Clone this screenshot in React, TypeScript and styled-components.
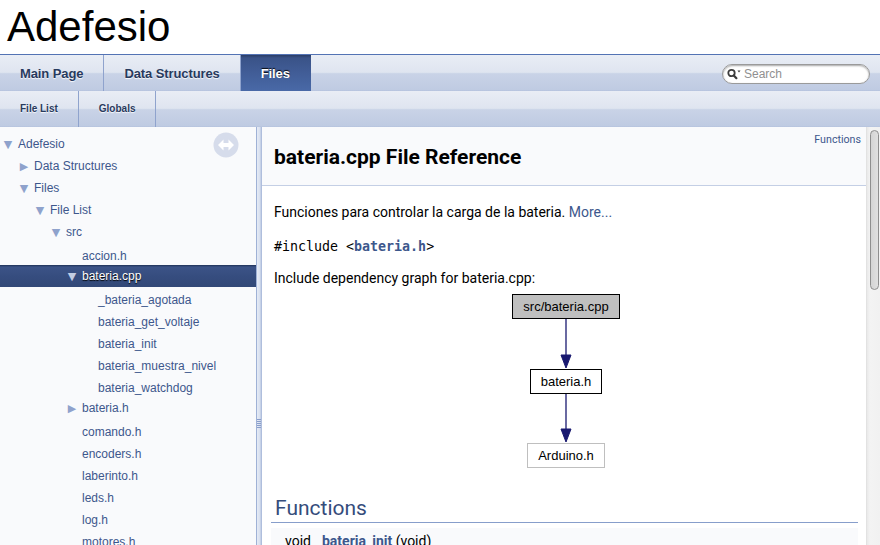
import React from "react";
import styled, { createGlobalStyle } from "styled-components";

const GlobalStyle = createGlobalStyle`
  html, body { margin: 0; padding: 0; background: #ffffff; }
  body { font-family: Roboto, "Liberation Sans", sans-serif; }
`;

const Page = styled.div`
  width: 880px;
  height: 545px;
  overflow: hidden;
  display: flex;
  flex-direction: column;
`;

const TitleArea = styled.div`
  height: 55px;
  box-sizing: border-box;
  padding: 3px 0 0 7px;
  border-bottom: 1px solid #5373b4;
  font: 42px "Liberation Sans", Arial, sans-serif;
  color: #000;
  line-height: normal;
`;

const NavBar = styled.div`
  height: 36px;
  display: flex;
  align-items: stretch;
  background: linear-gradient(
    to bottom,
    #e9edf5 0%,
    #dfe5f0 48%,
    #c9d3e7 52%,
    #bfcbe2 97%,
    #b3c1dd 100%
  );
`;

const Tab = styled.div<{ $active?: boolean; $small?: boolean }>`
  padding: ${(p) => (p.$small ? "0 20px" : "1px 20px 0")};
  height: 36px;
  box-sizing: border-box;
  font-family: "Liberation Sans", Arial, sans-serif;
  font-weight: bold;
  font-size: ${(p) => (p.$small ? "10px" : "13px")};
  letter-spacing: ${(p) => (p.$small ? "0" : "-0.1px")};
  line-height: ${(p) => (p.$small ? "36px" : "35px")};
  color: ${(p) => (p.$active ? "#ffffff" : "#283a5d")};
  text-shadow: ${(p) =>
    p.$active ? "0 -1px 1px rgba(0,0,0,0.9)" : "0 1px 1px rgba(255,255,255,0.9)"};
  border-right: 1px solid ${(p) => (p.$active ? "transparent" : "#8fa3cd")};
  background: ${(p) =>
    p.$active
      ? "linear-gradient(to bottom, #2a3d66 0px, #3a5388 3px, #415d97 50%, #4969a7 100%)"
      : "transparent"};
`;

const SearchWrap = styled.div`
  margin-left: auto;
  padding: 1px 10px 0 0;
  display: flex;
  align-items: center;
`;

const SearchBox = styled.div`
  width: 148px;
  height: 20px;
  box-sizing: border-box;
  border-radius: 10px;
  border: 1px solid #9a9a9a;
  background: #ffffff;
  box-shadow: inset 0 1px 2px rgba(0, 0, 0, 0.35);
  display: flex;
  align-items: center;
  padding-left: 4px;
  gap: 3px;
`;

const SearchText = styled.span`
  font: 12px "Liberation Sans", Arial, sans-serif;
  color: #909090;
`;

const Body = styled.div`
  flex: 1;
  display: flex;
  min-height: 0;
`;

const SideNav = styled.div`
  width: 256px;
  flex: none;
  position: relative;
  background: #f9fafc;
  padding-top: 6px;
  box-sizing: border-box;
  overflow: hidden;
`;

const SyncButton = styled.div`
  position: absolute;
  top: 5px;
  right: 17px;
  width: 26px;
  height: 26px;
`;

const TreeRow = styled.div<{ $level: number; $leaf?: boolean; $selected?: boolean }>`
  height: 22px;
  box-sizing: border-box;
  padding-left: ${(p) => p.$level * 16}px;
  padding-top: ${(p) => (p.$leaf ? "4px" : "0")};
  display: flex;
  align-items: center;
  white-space: nowrap;
  background: ${(p) =>
    p.$selected
      ? "linear-gradient(to bottom, #1f3157 0px, #3c5387 2px, #364d7f 50%, #324877 100%)"
      : "transparent"};
`;

const Arrow = styled.span<{ $selected?: boolean }>`
  width: 16px;
  flex: none;
  text-align: center;
  font: 11px "DejaVu Sans", sans-serif;
  color: ${(p) => (p.$selected ? "#c3cde3" : "#8fa2cc")};
`;

const TreeLabel = styled.span<{ $selected?: boolean }>`
  margin-left: 2px;
  font: 12px "Liberation Sans", Arial, sans-serif;
  color: ${(p) => (p.$selected ? "#ffffff" : "#3d578c")};
  text-shadow: ${(p) => (p.$selected ? "0 1px 1px rgba(0,0,0,1)" : "none")};
`;

const Splitter = styled.div`
  width: 6px;
  flex: none;
  display: flex;
  flex-direction: column;
  align-items: center;
  background: linear-gradient(
    to right,
    #9fb1d6 0px,
    #9fb1d6 1px,
    #e6ebf5 1px,
    #d7dfef 4px,
    #b7c5e0 5px,
    #a7b7d9 6px
  );
`;

const Grip = styled.div`
  margin-top: 292px;
  width: 4px;
  height: 9px;
  background: repeating-linear-gradient(
    to bottom,
    #8a9ecb 0px,
    #8a9ecb 1px,
    transparent 1px,
    transparent 2px
  );
`;

const DocArea = styled.div`
  flex: 1;
  display: flex;
  min-width: 0;
`;

const Doc = styled.div`
  flex: 1;
  min-width: 0;
  overflow: hidden;
  background: #ffffff;
`;

const Header = styled.div`
  background: #f9fafc;
  border-bottom: 1px solid #c4cfe5;
  height: 59px;
  box-sizing: border-box;
  display: flex;
  align-items: flex-start;
`;

const HeaderTitle = styled.div`
  flex: 1;
  padding: 16px 0 0 12px;
  font: bold 21px/28px Roboto, sans-serif;
  color: #000;
`;

const Summary = styled.a`
  padding: 6px 5px 0 0;
  font: 10.67px Roboto, sans-serif;
  color: #3d578c;
  text-decoration: none;
`;

const Contents = styled.div`
  margin: 0 8px 0 9px;
`;

const TextLine = styled.p<{ $top: number }>`
  margin: ${(p) => p.$top}px 0 0 0;
  padding-left: 3px;
  font: 14px/22px Roboto, sans-serif;
  color: #000;
`;

const Link = styled.a`
  color: #3d578c;
  text-decoration: none;
`;

const Code = styled.code`
  font: 13.3px "DejaVu Sans Mono", monospace;
  color: #000;
`;

const CodeLink = styled.a`
  color: #3d578c;
  font-weight: bold;
  text-decoration: none;
`;

const GraphWrap = styled.div`
  margin-top: 3px;
  display: flex;
  justify-content: center;
  padding-left: 3px;
`;

const GroupHeader = styled.h2`
  margin: 26px 0 0 0;
  padding: 0 0 2px 4px;
  font: 21px/24px Roboto, sans-serif;
  color: #354c7b;
  border-bottom: 1px solid #879ecb;
`;

const MemberRow = styled.div`
  margin-top: 5px;
  padding: 2px 0 0 14px;
  background: #f9fafc;
  font: 14px/22px Roboto, sans-serif;
  color: #000;
  display: flex;
  gap: 11px;
`;

const MemberLink = styled.a`
  color: #3d578c;
  font-weight: bold;
  text-decoration: none;
`;

const ScrollTrack = styled.div`
  width: 14px;
  flex: none;
  background: linear-gradient(to right, #e9e9e9 0px, #f3f3f3 3px, #f1f1f1 100%);
  border-left: 1px solid #e2e2e2;
  box-sizing: border-box;
  padding: 3px 1px 0 3px;
`;

const Thumb = styled.div`
  height: 160px;
  border: 1px solid #8e8e8e;
  border-radius: 5px;
  background: linear-gradient(to right, #d4d4d4, #e0e0e0);
  box-sizing: border-box;
`;

type Node = {
  label: string;
  level: number;
  arrow?: "down" | "right";
  selected?: boolean;
};

const tree: Node[] = [
  { label: "Adefesio", level: 0, arrow: "down" },
  { label: "Data Structures", level: 1, arrow: "right" },
  { label: "Files", level: 1, arrow: "down" },
  { label: "File List", level: 2, arrow: "down" },
  { label: "src", level: 3, arrow: "down" },
  { label: "accion.h", level: 4 },
  { label: "bateria.cpp", level: 4, arrow: "down", selected: true },
  { label: "_bateria_agotada", level: 5 },
  { label: "bateria_get_voltaje", level: 5 },
  { label: "bateria_init", level: 5 },
  { label: "bateria_muestra_nivel", level: 5 },
  { label: "bateria_watchdog", level: 5 },
  { label: "bateria.h", level: 4, arrow: "right" },
  { label: "comando.h", level: 4 },
  { label: "encoders.h", level: 4 },
  { label: "laberinto.h", level: 4 },
  { label: "leds.h", level: 4 },
  { label: "log.h", level: 4 },
  { label: "motores.h", level: 4 },
];

const SearchIcon = () => (
  <svg width="14" height="12" viewBox="0 0 14 12">
    <circle cx="4.5" cy="5" r="3.2" fill="none" stroke="#3c3c3c" strokeWidth="1.8" />
    <line x1="6.8" y1="7.4" x2="9.4" y2="10.2" stroke="#3c3c3c" strokeWidth="2.2" strokeLinecap="round" />
    <polygon points="10.5,2.5 13.5,2.5 12,4.5" fill="#3c3c3c" />
  </svg>
);

const SyncIcon = () => (
  <svg width="26" height="26" viewBox="0 0 26 26">
    <circle cx="13" cy="13" r="12.5" fill="#d6dceb" />
    <path d="M5 13 L10.5 7.5 L10.5 11 L15.5 11 L15.5 7.5 L21 13 L15.5 18.5 L15.5 15 L10.5 15 L10.5 18.5 Z" fill="#ffffff" />
  </svg>
);

const DepGraph = () => (
  <svg width="112" height="178" viewBox="0 0 112 178">
    <rect x="2.5" y="2.5" width="107" height="24" fill="#bfbfbf" stroke="#000" />
    <text x="56" y="19" textAnchor="middle" fontFamily="Liberation Sans, Arial, sans-serif" fontSize="13" fill="#000">
      src/bateria.cpp
    </text>
    <line x1="56" y1="27" x2="56" y2="64" stroke="#191970" strokeWidth="1.3" />
    <polygon points="51,63 61,63 56,76" fill="#191970" stroke="#191970" />
    <rect x="20.5" y="77.5" width="71" height="24" fill="#ffffff" stroke="#000" />
    <text x="56" y="94" textAnchor="middle" fontFamily="Liberation Sans, Arial, sans-serif" fontSize="13" fill="#000">
      bateria.h
    </text>
    <line x1="56" y1="102" x2="56" y2="138" stroke="#191970" strokeWidth="1.3" />
    <polygon points="51,137 61,137 56,150" fill="#191970" stroke="#191970" />
    <rect x="17.5" y="151.5" width="77" height="24" fill="#ffffff" stroke="#bfbfbf" />
    <text x="56" y="168" textAnchor="middle" fontFamily="Liberation Sans, Arial, sans-serif" fontSize="13" fill="#000">
      Arduino.h
    </text>
  </svg>
);

export default function App() {
  return (
    <>
      <GlobalStyle />
      <Page>
        <TitleArea>Adefesio</TitleArea>
        <NavBar>
          <Tab>Main Page</Tab>
          <Tab>Data Structures</Tab>
          <Tab $active>Files</Tab>
          <SearchWrap>
            <SearchBox>
              <SearchIcon />
              <SearchText>Search</SearchText>
            </SearchBox>
          </SearchWrap>
        </NavBar>
        <NavBar>
          <Tab $small>File List</Tab>
          <Tab $small>Globals</Tab>
        </NavBar>
        <Body>
          <SideNav>
            <SyncButton>
              <SyncIcon />
            </SyncButton>
            {tree.map((n) => (
              <TreeRow key={n.label} $level={n.level} $leaf={!n.arrow} $selected={n.selected}>
                <Arrow $selected={n.selected}>
                  {n.arrow === "down" ? "\u25BC" : n.arrow === "right" ? "\u25B6" : ""}
                </Arrow>
                <TreeLabel $selected={n.selected}>{n.label}</TreeLabel>
              </TreeRow>
            ))}
          </SideNav>
          <Splitter>
            <Grip />
          </Splitter>
          <DocArea>
            <Doc>
              <Header>
                <HeaderTitle>bateria.cpp File Reference</HeaderTitle>
                <Summary>Functions</Summary>
              </Header>
              <Contents>
                <TextLine $top={15}>
                  Funciones para controlar la carga de la bateria. <Link>More...</Link>
                </TextLine>
                <TextLine $top={12}>
                  <Code>
                    #include &lt;<CodeLink>bateria.h</CodeLink>&gt;
                  </Code>
                </TextLine>
                <TextLine $top={10}>Include dependency graph for bateria.cpp:</TextLine>
                <GraphWrap>
                  <DepGraph />
                </GraphWrap>
                <GroupHeader>Functions</GroupHeader>
                <MemberRow>
                  <span>void</span>
                  <span>
                    <MemberLink>bateria_init</MemberLink> (void)
                  </span>
                </MemberRow>
              </Contents>
            </Doc>
            <ScrollTrack>
              <Thumb />
            </ScrollTrack>
          </DocArea>
        </Body>
      </Page>
    </>
  );
}
